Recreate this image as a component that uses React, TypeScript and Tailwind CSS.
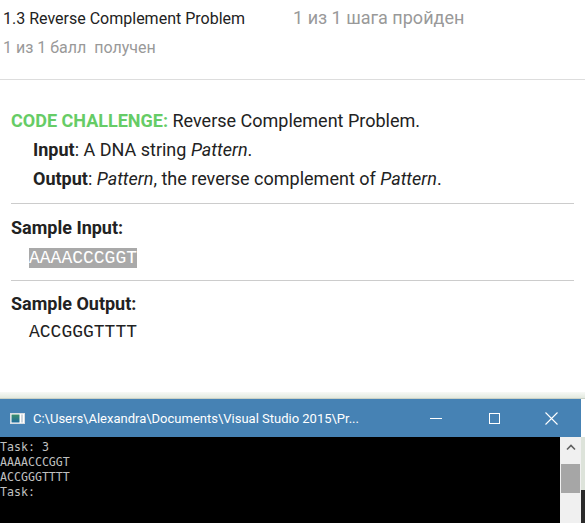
import React from "react";

function ConsoleWindow() {
  return (
    <div className="flex flex-col">
      <div className="h-[6px] bg-gradient-to-b from-[#f7f9f6] to-[#e3e9df]" />
      <div className="h-px bg-[#c9d1c6]" />
      <div className="flex h-[38px] w-[581px] items-center bg-[#4682b4] text-white">
        <svg width="15" height="11" viewBox="0 0 15 11" className="ml-[10px] mr-[8px] shrink-0">
          <defs>
            <linearGradient id="ico" x1="0" y1="0" x2="0" y2="1">
              <stop offset="0" stopColor="#3a8f6a" />
              <stop offset="1" stopColor="#1e6a9c" />
            </linearGradient>
          </defs>
          <rect x="0.5" y="0.5" width="14" height="10" fill="#fff" stroke="#d8dde2" />
          <rect x="1.5" y="1.5" width="8" height="8" fill="url(#ico)" />
          <rect x="11" y="1.5" width="2" height="8" fill="#cfd6dc" />
        </svg>
        <span className="whitespace-nowrap font-['Roboto',sans-serif] text-[13px] leading-none">
          C:\Users\Alexandra\Documents\Visual Studio 2015\Pr...
        </span>
        <div className="ml-auto flex items-center">
          <div className="flex w-[58px] justify-center">
            <div className="h-px w-[12px] bg-white" />
          </div>
          <div className="flex w-[58px] justify-center">
            <div className="h-[11px] w-[11px] border border-white" />
          </div>
          <div className="flex w-[58px] justify-center pr-[2px]">
            <svg width="13" height="13" viewBox="0 0 13 13">
              <path d="M0.5 0.5 L12.5 12.5 M12.5 0.5 L0.5 12.5" stroke="#fff" strokeWidth="1.1" />
            </svg>
          </div>
        </div>
      </div>
      <div className="flex h-[86px]">
        <div className="w-[560px] bg-black pt-[3px] font-['DejaVu_Sans_Mono',monospace] text-[11.6px] leading-[15px] text-[#c0c0c0]">
          <div>Task: 3</div>
          <div>AAAACCCGGT</div>
          <div>ACCGGGTTTT</div>
          <div>Task:</div>
        </div>
        <div className="flex w-[21px] flex-col items-center bg-[#f0f0f0]">
          <svg width="10" height="7" viewBox="0 0 10 7" className="mt-[7px]">
            <path d="M1 5.5 L5 1.5 L9 5.5" stroke="#606060" strokeWidth="1.6" fill="none" />
          </svg>
          <div className="mt-[13px] h-[29px] w-[19px] bg-[#a6a6a6]" />
        </div>
        <div className="flex w-[4px] flex-col">
          <div className="h-[53px] bg-[#dde3da]" />
          <div className="flex-1 bg-[#2a2a2a]" />
        </div>
      </div>
    </div>
  );
}

export default function App() {
  return (
    <div className="h-[523px] w-[585px] overflow-hidden bg-white font-['Roboto',sans-serif] text-[#222]">
      <div className="border-b border-[#dddddd] px-[3px] pb-[17px] pt-[3px] text-[16px] leading-[29px]">
        <div className="flex items-baseline">
          <span>1.3 Reverse Complement Problem</span>
          <span className="ml-[48px] text-[18px] text-[#999]">1 из 1 шага пройден</span>
        </div>
        <div className="text-[#999]">1 из 1 балл&nbsp; получен</div>
      </div>

      <div className="px-[11px] pt-[26px] text-[18px] leading-[29px]">
        <div className="pb-[10px]">
          <div>
            <span className="font-bold text-[#66cc66]">CODE CHALLENGE:</span> Reverse Complement Problem.
          </div>
          <div className="pl-[22px]">
            <b>Input</b>: A DNA string <i>Pattern</i>.
          </div>
          <div className="pl-[22px]">
            <b>Output</b>: <i>Pattern</i>, the reverse complement of <i>Pattern</i>.
          </div>
        </div>

        <div className="border-t border-[#cccccc] pb-[9px] pt-[9px]">
          <div className="h-[29px] font-bold">Sample Input:</div>
          <div className="h-[29px] pl-[18px]">
            <span className="bg-[#a9a9a9] font-['Liberation_Mono',monospace] text-[18px] leading-[20px] text-white">AAAACCCGGT</span>
          </div>
        </div>

        <div className="border-t border-[#cccccc] pt-[8px]">
          <div className="h-[29px] font-bold">Sample Output:</div>
          <div className="h-[29px] pl-[18px] font-['Liberation_Mono',monospace] text-[18px]">ACCGGGTTTT</div>
        </div>
      </div>

      <div className="mt-[45px]">
        <ConsoleWindow />
      </div>
    </div>
  );
}
